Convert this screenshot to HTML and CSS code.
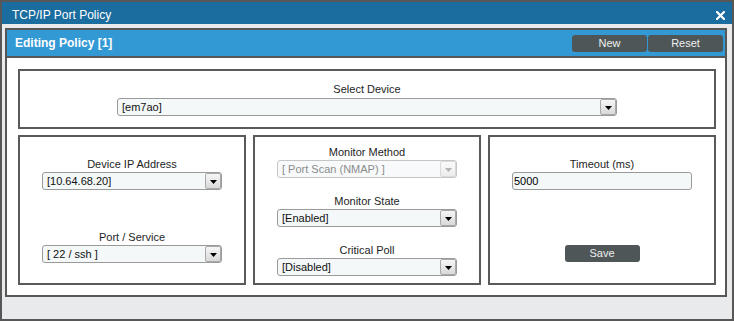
FILE: index.html
```html
<!DOCTYPE html>
<html>
<head>
<meta charset="utf-8">
<title>TCP/IP Port Policy</title>
<link rel="stylesheet" href="styles.css">
</head>
<body>
<div class="window">
  <div class="titlebar">
    <span class="title">TCP/IP Port Policy</span>
    <svg class="close" viewBox="0 0 9 9" width="9" height="9"><path d="M1 1L8 8M8 1L1 8" stroke="#fff" stroke-width="2.2" stroke-linecap="square" fill="none"/></svg>
  </div>
  <div class="panel">
    <div class="panel-header">
      <span class="panel-title">Editing Policy [1]</span>
      <div class="actions">
        <button class="btn">New</button>
        <button class="btn">Reset</button>
      </div>
    </div>
    <div class="panel-body">
      <div class="box box-device">
        <div class="field-label">Select Device</div>
        <div class="select select-device">
          <span class="select-text">[em7ao]</span>
          <span class="select-arrow"><svg viewBox="0 0 7 4" width="7" height="4"><path d="M0 0H7L3.5 4Z" fill="#000"/></svg></span>
        </div>
      </div>
      <div class="row">
        <div class="box col col-ip">
          <div class="field-label">Device IP Address</div>
          <div class="select">
            <span class="select-text">[10.64.68.20]</span>
            <span class="select-arrow"><svg viewBox="0 0 7 4" width="7" height="4"><path d="M0 0H7L3.5 4Z" fill="#000"/></svg></span>
          </div>
          <div class="field-label field-port">Port / Service</div>
          <div class="select">
            <span class="select-text">[ 22 / ssh ]</span>
            <span class="select-arrow"><svg viewBox="0 0 7 4" width="7" height="4"><path d="M0 0H7L3.5 4Z" fill="#000"/></svg></span>
          </div>
        </div>
        <div class="box col col-monitor">
          <div class="field-label">Monitor Method</div>
          <div class="select select-disabled">
            <span class="select-text">[ Port Scan (NMAP) ]</span>
            <span class="select-arrow"><svg viewBox="0 0 7 4" width="7" height="4"><path d="M0 0H7L3.5 4Z" fill="#b4b4b4"/></svg></span>
          </div>
          <div class="field-label field-next">Monitor State</div>
          <div class="select">
            <span class="select-text">[Enabled]</span>
            <span class="select-arrow"><svg viewBox="0 0 7 4" width="7" height="4"><path d="M0 0H7L3.5 4Z" fill="#000"/></svg></span>
          </div>
          <div class="field-label field-next">Critical Poll</div>
          <div class="select">
            <span class="select-text">[Disabled]</span>
            <span class="select-arrow"><svg viewBox="0 0 7 4" width="7" height="4"><path d="M0 0H7L3.5 4Z" fill="#000"/></svg></span>
          </div>
        </div>
        <div class="box col col-timeout">
          <div class="field-label">Timeout (ms)</div>
          <input class="input" type="text" value="5000">
          <button class="btn btn-save">Save</button>
        </div>
      </div>
    </div>
  </div>
</div>
</body>
</html>
```

FILE: styles.css
```css
* {
  box-sizing: border-box;
}

body {
  margin: 0;
  font-family: "Liberation Sans", Arial, sans-serif;
  color: #1e1e1e;
}

.window {
  width: 734px;
  height: 321px;
  border: 2px solid #575757;
  background: #e9eaec;
  display: flex;
  flex-direction: column;
}

.titlebar {
  height: 22px;
  flex: none;
  background: #1b6da0;
  color: #fff;
  display: flex;
  align-items: center;
  justify-content: space-between;
  padding: 4px 7px 0 10px;
  font-size: 12px;
}

.close {
  display: block;
}

.panel {
  margin: 4px 5px 0 3px;
  border: 2px solid #575757;
  background: #fff;
}

.panel-header {
  height: 28px;
  background: #3399d5;
  border-bottom: 2px solid #575757;
  display: flex;
  align-items: center;
  justify-content: space-between;
  padding: 0 2px 0 8px;
}

.panel-title {
  color: #fff;
  font-weight: bold;
  font-size: 12px;
}

.actions {
  display: flex;
  gap: 1px;
}

.btn {
  width: 75px;
  height: 17px;
  padding: 0;
  border: none;
  border-radius: 3px;
  background: #4f5657;
  color: #eef0f0;
  font-family: "Liberation Sans", Arial, sans-serif;
  font-size: 11px;
  line-height: 17px;
}

.panel-body {
  padding: 11px 9px 10px 11px;
  display: flex;
  flex-direction: column;
  gap: 6px;
}

.box {
  border: 2px solid #5a5a5a;
  display: flex;
  flex-direction: column;
  align-items: center;
}

.box-device {
  height: 60px;
  padding-top: 12px;
}

.row {
  display: flex;
  gap: 7px;
  height: 150px;
}

.col {
  flex: 1 1 0;
}

.col-ip,
.col-timeout {
  padding-top: 21px;
}

.col-monitor {
  padding-top: 9px;
}

.field-label {
  font-size: 11px;
  line-height: 13px;
  margin-bottom: 1px;
  color: #1e1e1e;
}

.box-device .field-label {
  margin-bottom: 2px;
}

.field-port {
  margin-top: 41px;
}

.field-next {
  margin-top: 17px;
}

.select {
  width: 180px;
  height: 18px;
  border: 1px solid #9a9a9a;
  border-radius: 3px;
  background: #f4f8f9;
  display: flex;
  align-items: center;
  justify-content: space-between;
  font-size: 11px;
}

.select-device {
  width: 500px;
}

.select-text {
  padding-left: 4px;
  white-space: nowrap;
  color: #111;
}

.select-arrow {
  width: 16px;
  height: 16px;
  border: 1px solid #a9a9a9;
  border-radius: 2px;
  background: linear-gradient(#f6f6f6, #d9d9d9);
  display: flex;
  align-items: center;
  justify-content: center;
  padding-top: 1px;
}

.select-arrow svg {
  display: block;
}

.select-disabled {
  border-color: #c6c6c6;
  background: #f7f9fa;
}

.select-disabled .select-text {
  color: #8c8c8c;
}

.select-disabled .select-arrow {
  border-color: #dadada;
  background: linear-gradient(#fafafa, #ececec);
}

.input {
  width: 180px;
  height: 18px;
  border: 1px solid #9a9a9a;
  border-radius: 3px;
  background: #f4f8f9;
  padding: 0 0 0 1px;
  font-family: "Liberation Sans", Arial, sans-serif;
  font-size: 11px;
  color: #000;
  outline: none;
}

.btn-save {
  margin-top: 55px;
}
```
